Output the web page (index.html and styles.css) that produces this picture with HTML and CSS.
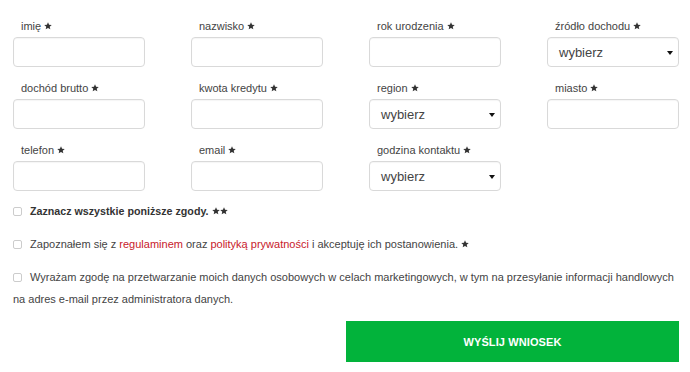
FILE: index.html
```html
<!DOCTYPE html>
<html lang="pl">
<head>
<meta charset="utf-8">
<link rel="stylesheet" href="styles.css">
</head>
<body>
<form class="form">
  <div class="grid">
    <div class="field"><label class="label">imię <svg class="star" viewBox="0 0 10 10"><path d="M5 0.4l1.35 3.05 3.3.3-2.5 2.2.75 3.25L5 7.5 2.1 9.2l.75-3.25-2.5-2.2 3.3-.3z"/></svg></label><input class="input" type="text"></div>
    <div class="field"><label class="label">nazwisko <svg class="star" viewBox="0 0 10 10"><path d="M5 0.4l1.35 3.05 3.3.3-2.5 2.2.75 3.25L5 7.5 2.1 9.2l.75-3.25-2.5-2.2 3.3-.3z"/></svg></label><input class="input" type="text"></div>
    <div class="field"><label class="label">rok urodzenia <svg class="star" viewBox="0 0 10 10"><path d="M5 0.4l1.35 3.05 3.3.3-2.5 2.2.75 3.25L5 7.5 2.1 9.2l.75-3.25-2.5-2.2 3.3-.3z"/></svg></label><input class="input" type="text"></div>
    <div class="field"><label class="label">źródło dochodu <svg class="star" viewBox="0 0 10 10"><path d="M5 0.4l1.35 3.05 3.3.3-2.5 2.2.75 3.25L5 7.5 2.1 9.2l.75-3.25-2.5-2.2 3.3-.3z"/></svg></label><div class="select"><span>wybierz</span><span class="caret"></span></div></div>

    <div class="field"><label class="label">dochód brutto <svg class="star" viewBox="0 0 10 10"><path d="M5 0.4l1.35 3.05 3.3.3-2.5 2.2.75 3.25L5 7.5 2.1 9.2l.75-3.25-2.5-2.2 3.3-.3z"/></svg></label><input class="input" type="text"></div>
    <div class="field"><label class="label">kwota kredytu <svg class="star" viewBox="0 0 10 10"><path d="M5 0.4l1.35 3.05 3.3.3-2.5 2.2.75 3.25L5 7.5 2.1 9.2l.75-3.25-2.5-2.2 3.3-.3z"/></svg></label><input class="input" type="text"></div>
    <div class="field"><label class="label">region <svg class="star" viewBox="0 0 10 10"><path d="M5 0.4l1.35 3.05 3.3.3-2.5 2.2.75 3.25L5 7.5 2.1 9.2l.75-3.25-2.5-2.2 3.3-.3z"/></svg></label><div class="select"><span>wybierz</span><span class="caret"></span></div></div>
    <div class="field"><label class="label">miasto <svg class="star" viewBox="0 0 10 10"><path d="M5 0.4l1.35 3.05 3.3.3-2.5 2.2.75 3.25L5 7.5 2.1 9.2l.75-3.25-2.5-2.2 3.3-.3z"/></svg></label><input class="input" type="text"></div>

    <div class="field"><label class="label">telefon <svg class="star" viewBox="0 0 10 10"><path d="M5 0.4l1.35 3.05 3.3.3-2.5 2.2.75 3.25L5 7.5 2.1 9.2l.75-3.25-2.5-2.2 3.3-.3z"/></svg></label><input class="input" type="text"></div>
    <div class="field"><label class="label">email <svg class="star" viewBox="0 0 10 10"><path d="M5 0.4l1.35 3.05 3.3.3-2.5 2.2.75 3.25L5 7.5 2.1 9.2l.75-3.25-2.5-2.2 3.3-.3z"/></svg></label><input class="input" type="text"></div>
    <div class="field"><label class="label">godzina kontaktu <svg class="star" viewBox="0 0 10 10"><path d="M5 0.4l1.35 3.05 3.3.3-2.5 2.2.75 3.25L5 7.5 2.1 9.2l.75-3.25-2.5-2.2 3.3-.3z"/></svg></label><div class="select"><span>wybierz</span><span class="caret"></span></div></div>
  </div>

  <div class="consents">
    <p class="consent bold"><input class="check" type="checkbox"> Zaznacz wszystkie poniższe zgody. <svg class="star" viewBox="0 0 10 10"><path d="M5 0.4l1.35 3.05 3.3.3-2.5 2.2.75 3.25L5 7.5 2.1 9.2l.75-3.25-2.5-2.2 3.3-.3z"/></svg><svg class="star" viewBox="0 0 10 10"><path d="M5 0.4l1.35 3.05 3.3.3-2.5 2.2.75 3.25L5 7.5 2.1 9.2l.75-3.25-2.5-2.2 3.3-.3z"/></svg></p>
    <p class="consent"><input class="check" type="checkbox"> Zapoznałem się z <a class="link" href="#">regulaminem</a> oraz <a class="link" href="#">polityką prywatności</a> i akceptuję ich postanowienia. <svg class="star" viewBox="0 0 10 10"><path d="M5 0.4l1.35 3.05 3.3.3-2.5 2.2.75 3.25L5 7.5 2.1 9.2l.75-3.25-2.5-2.2 3.3-.3z"/></svg></p>
    <p class="consent"><input class="check" type="checkbox"> Wyrażam zgodę na przetwarzanie moich danych osobowych w celach marketingowych, w tym na przesyłanie informacji handlowych na adres e-mail przez administratora danych.</p>
  </div>

  <div class="actions">
    <button class="submit" type="button">WYŚLIJ WNIOSEK</button>
  </div>
</form>
</body>
</html>
```

FILE: styles.css
```css
* { box-sizing: border-box; }
html, body { margin: 0; padding: 0; background: #fff; }
body {
  font-family: "Liberation Sans", Arial, sans-serif;
  color: #444;
  font-size: 11px;
}
.form { padding: 18px 11px 0 13px; }
.grid {
  display: grid;
  grid-template-columns: repeat(4, 132px);
  column-gap: 46px;
  row-gap: 13px;
}
.field { display: flex; flex-direction: column; }
.label {
  display: block;
  line-height: 16px;
  height: 16px;
  padding-left: 8px;
  margin-bottom: 3px;
  color: #444;
  font-size: 11px;
}
.star { width: 8px; height: 8px; fill: #333; vertical-align: 0px; }
.input, .select {
  height: 30px;
  width: 132px;
  border: 1px solid #d9d9d9;
  border-radius: 4px;
  background: #fff;
  box-shadow: inset 0 1px 1px rgba(0,0,0,0.04);
  margin: 0;
}
.select {
  display: flex;
  align-items: center;
  justify-content: space-between;
  padding: 0 5px 0 11px;
  font-size: 13px;
  color: #444;
}
.caret {
  width: 0; height: 0;
  border-left: 3.5px solid transparent;
  border-right: 3.5px solid transparent;
  border-top: 4px solid #111;
  margin-top: 1px;
}
.consents { margin-top: 9px; margin-right: -8px; }
.consent {
  margin: 0 0 11px 0;
  line-height: 22px;
  font-size: 11px;
  color: #444;
}
.consent.bold { font-weight: bold; color: #333; font-size: 10.7px; }
.check {
  -webkit-appearance: none;
  appearance: none;
  width: 9px; height: 9px;
  border: 1px solid #ccc;
  border-radius: 2px;
  margin: 0 5px 0 0;
  vertical-align: -1px;
  background: #fff;
}
.link { color: #c8202b; text-decoration: none; }
.actions { display: flex; justify-content: flex-end; }
.submit {
  width: 333px;
  height: 41px;
  border: 0;
  background: #02b33b;
  color: #fff;
  font-family: "Liberation Sans", Arial, sans-serif;
  font-weight: bold;
  font-size: 11px;
  letter-spacing: 0.1px;
}
```
